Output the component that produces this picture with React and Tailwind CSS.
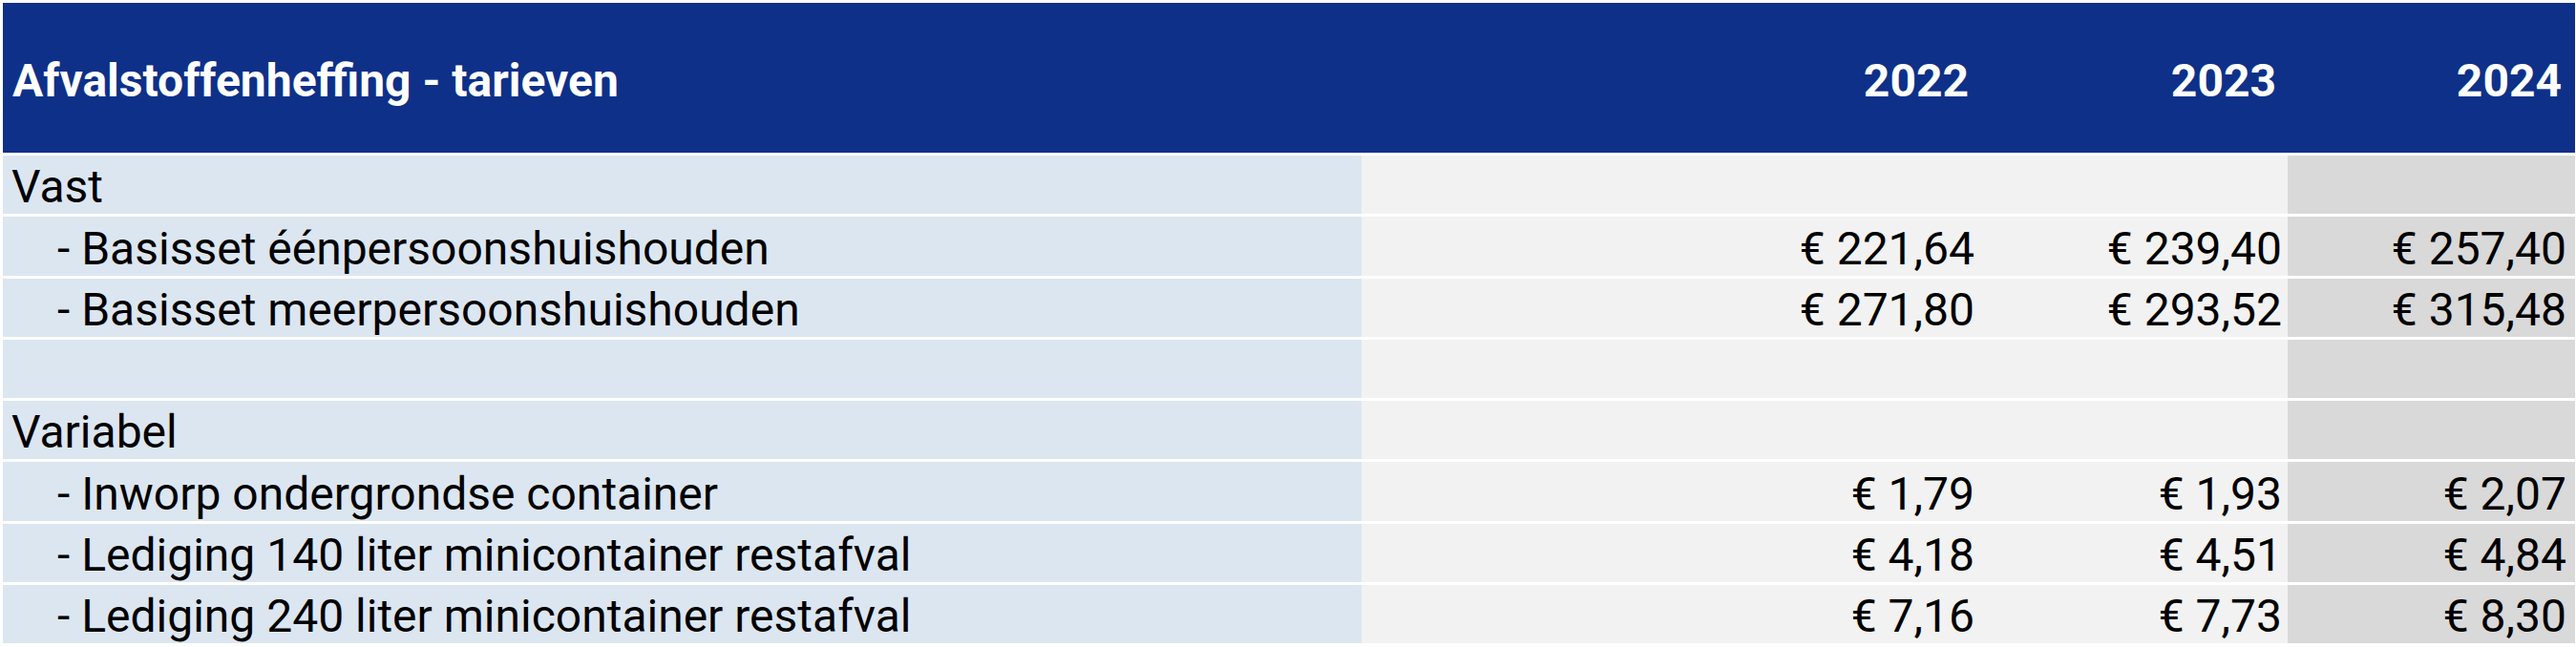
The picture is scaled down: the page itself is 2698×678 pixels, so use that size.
const rows = [
  { label: "Vast", indent: false, values: ["", "", ""] },
  { label: "- Basisset éénpersoonshuishouden", indent: true, values: ["€ 221,64", "€ 239,40", "€ 257,40"] },
  { label: "- Basisset meerpersoonshuishouden", indent: true, values: ["€ 271,80", "€ 293,52", "€ 315,48"] },
  { label: "", indent: false, values: ["", "", ""] },
  { label: "Variabel", indent: false, values: ["", "", ""] },
  { label: "- Inworp ondergrondse container", indent: true, values: ["€ 1,79", "€ 1,93", "€ 2,07"] },
  { label: "- Lediging 140 liter minicontainer restafval", indent: true, values: ["€ 4,18", "€ 4,51", "€ 4,84"] },
  { label: "- Lediging 240 liter minicontainer restafval", indent: true, values: ["€ 7,16", "€ 7,73", "€ 8,30"] },
];

function Row({ label, indent, values }) {
  return (
    <div className="grid grid-cols-[1423px_648px_322px_301px] h-[61.25px] text-black">
      <div className={`flex items-end bg-[#dce6f1] ${indent ? "pl-[57px]" : "pl-[9px]"}`}>
        <span className="leading-[56px] whitespace-nowrap">{label}</span>
      </div>
      <div className="flex items-end justify-end bg-[#f2f2f2] pr-[6px]">
        <span className="leading-[56px] whitespace-nowrap">{values[0]}</span>
      </div>
      <div className="flex items-end justify-end bg-[#f2f2f2] pr-[6px]">
        <span className="leading-[56px] whitespace-nowrap">{values[1]}</span>
      </div>
      <div className="flex items-end justify-end bg-[#d9d9d9] pr-[9px]">
        <span className="leading-[56px] whitespace-nowrap">{values[2]}</span>
      </div>
    </div>
  );
}

export default function App() {
  return (
    <div className="bg-white w-[2698px] h-[678px] pt-[3px] pl-[3px] font-['Roboto',sans-serif] text-[48px]">
      <div className="flex flex-col gap-y-[3px] w-[2694px]">
        <div className="grid grid-cols-[1423px_648px_322px_301px] h-[157px] bg-[#0e3089] text-white font-bold">
          <div className="pl-[10px] pt-[54px] leading-[56px] whitespace-nowrap">Afvalstoffenheffing - tarieven</div>
          <div className="pr-[12px] pt-[54px] leading-[56px] text-right">2022</div>
          <div className="pr-[12px] pt-[54px] leading-[56px] text-right">2023</div>
          <div className="pr-[14px] pt-[54px] leading-[56px] text-right">2024</div>
        </div>
        {rows.map((r, i) => (
          <Row key={i} {...r} />
        ))}
      </div>
    </div>
  );
}
